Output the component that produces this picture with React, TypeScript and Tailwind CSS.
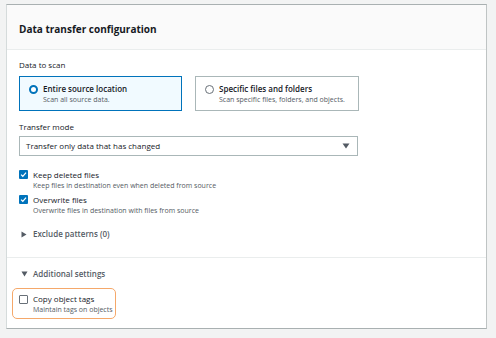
import React from "react";

const font = { fontFamily: '"Open Sans", "Noto Sans", Arial, sans-serif' };

function Check({ checked }: { checked: boolean }) {
  return checked ? (
    <div className="w-[9px] h-[9px] rounded-[1px] bg-[#0073bb] flex items-center justify-center shrink-0">
      <svg width="7" height="7" viewBox="0 0 10 10">
        <path d="M1.5 5.2 L4 7.6 L8.6 2.4" fill="none" stroke="white" strokeWidth="1.8" />
      </svg>
    </div>
  ) : (
    <div className="w-[9px] h-[9px] rounded-[1px] border border-[#687078] bg-white shrink-0" />
  );
}

export default function App() {
  return (
    <div className="w-[496px] h-[338px] bg-[#f2f3f3] pt-[4px] pl-[6px] overflow-hidden text-[#16191f]" style={font}>
      <div className="w-[481px] h-[325px] bg-white border border-[#d5dbdb] border-t-[#a9b0b1] border-b-[#a9b0b1] border-r-[#bfc4c4] flex flex-col">
        <div className="h-[45px] bg-[#fafafa] border-b border-[#eaeded] flex items-center pl-[12px] pt-[5px]">
          <span className="text-[10px] font-bold">Data transfer configuration</span>
        </div>
        <div className="pl-[12px] pt-[9px]">
          <div className="text-[8px] leading-[12px]">Data to scan</div>
          <div className="flex gap-[13px] mt-[5px]">
            <div className="w-[163px] h-[35px] border border-[#0073bb] bg-[#f1faff] flex pt-[6px] pl-[9px]">
              <div className="w-[9px] h-[9px] rounded-full border-[2.5px] border-[#0073bb] bg-white mt-[2px] shrink-0" />
              <div className="ml-[5px]">
                <div className="text-[8px] leading-[11px] font-semibold">Entire source location</div>
                <div className="text-[7px] leading-[12px] text-[#545b64]">Scan all source data.</div>
              </div>
            </div>
            <div className="w-[164px] h-[35px] border border-[#aab7b8] bg-white flex pt-[6px] pl-[9px]">
              <div className="w-[9px] h-[9px] rounded-full border border-[#687078] bg-white mt-[2px] shrink-0" />
              <div className="ml-[5px]">
                <div className="text-[8px] leading-[11px] font-semibold">Specific files and folders</div>
                <div className="text-[7px] leading-[12px] text-[#545b64]">Scan specific files, folders, and objects.</div>
              </div>
            </div>
          </div>
          <div className="text-[8px] leading-[12px] mt-[10px]">Transfer mode</div>
          <div className="w-[339px] h-[20px] mt-[3px] border border-[#aab7b8] flex items-center justify-between pl-[6px] pr-[7px]">
            <span className="text-[8px]">Transfer only data that has changed</span>
            <svg width="8" height="6" viewBox="0 0 8 6">
              <path d="M0.5 0.5 H7.5 L4 5.5 Z" fill="#545b64" />
            </svg>
          </div>
          <div className="mt-[13px] flex flex-col">
            <div className="flex items-start">
              <div className="mt-[1px]"><Check checked /></div>
              <div className="ml-[5px]">
                <div className="text-[8px] leading-[11px]">Keep deleted files</div>
                <div className="text-[7px] leading-[11px] text-[#545b64]">Keep files in destination even when deleted from source</div>
              </div>
            </div>
            <div className="flex items-start mt-[3px]">
              <div className="mt-[1px]"><Check checked /></div>
              <div className="ml-[5px]">
                <div className="text-[8px] leading-[11px]">Overwrite files</div>
                <div className="text-[7px] leading-[12px] text-[#545b64]">Overwrite files in destination with files from source</div>
              </div>
            </div>
          </div>
          <div className="flex items-center mt-[11px] pl-[2px]">
            <svg width="6" height="7" viewBox="0 0 6 7">
              <path d="M0.5 0.5 L5.5 3.5 L0.5 6.5 Z" fill="#545b64" />
            </svg>
            <span className="ml-[6px] text-[8px] font-semibold text-[#545b64]">Exclude patterns (0)</span>
          </div>
        </div>
        <div className="mt-[17px] border-t border-[#eaeded]" />
        <div className="pl-[12px] pt-[10px]">
          <div className="flex items-center pl-[2px]">
            <svg width="7" height="6" viewBox="0 0 7 6">
              <path d="M0.5 0.5 H6.5 L3.5 5.5 Z" fill="#545b64" />
            </svg>
            <span className="ml-[5px] text-[8px] font-semibold text-[#545b64]">Additional settings</span>
          </div>
          <div className="mt-[8px] -ml-[7px] w-[104px] h-[31px] rounded-[5px] border-[1.5px] border-[#f5a86a] flex items-start pl-[6px] pt-[4px]">
            <div className="mt-[2px]"><Check checked={false} /></div>
            <div className="ml-[5px]">
              <div className="text-[8px] leading-[11px]">Copy object tags</div>
              <div className="text-[7px] leading-[11px] text-[#545b64]">Maintain tags on objects</div>
            </div>
          </div>
        </div>
      </div>
    </div>
  );
}
